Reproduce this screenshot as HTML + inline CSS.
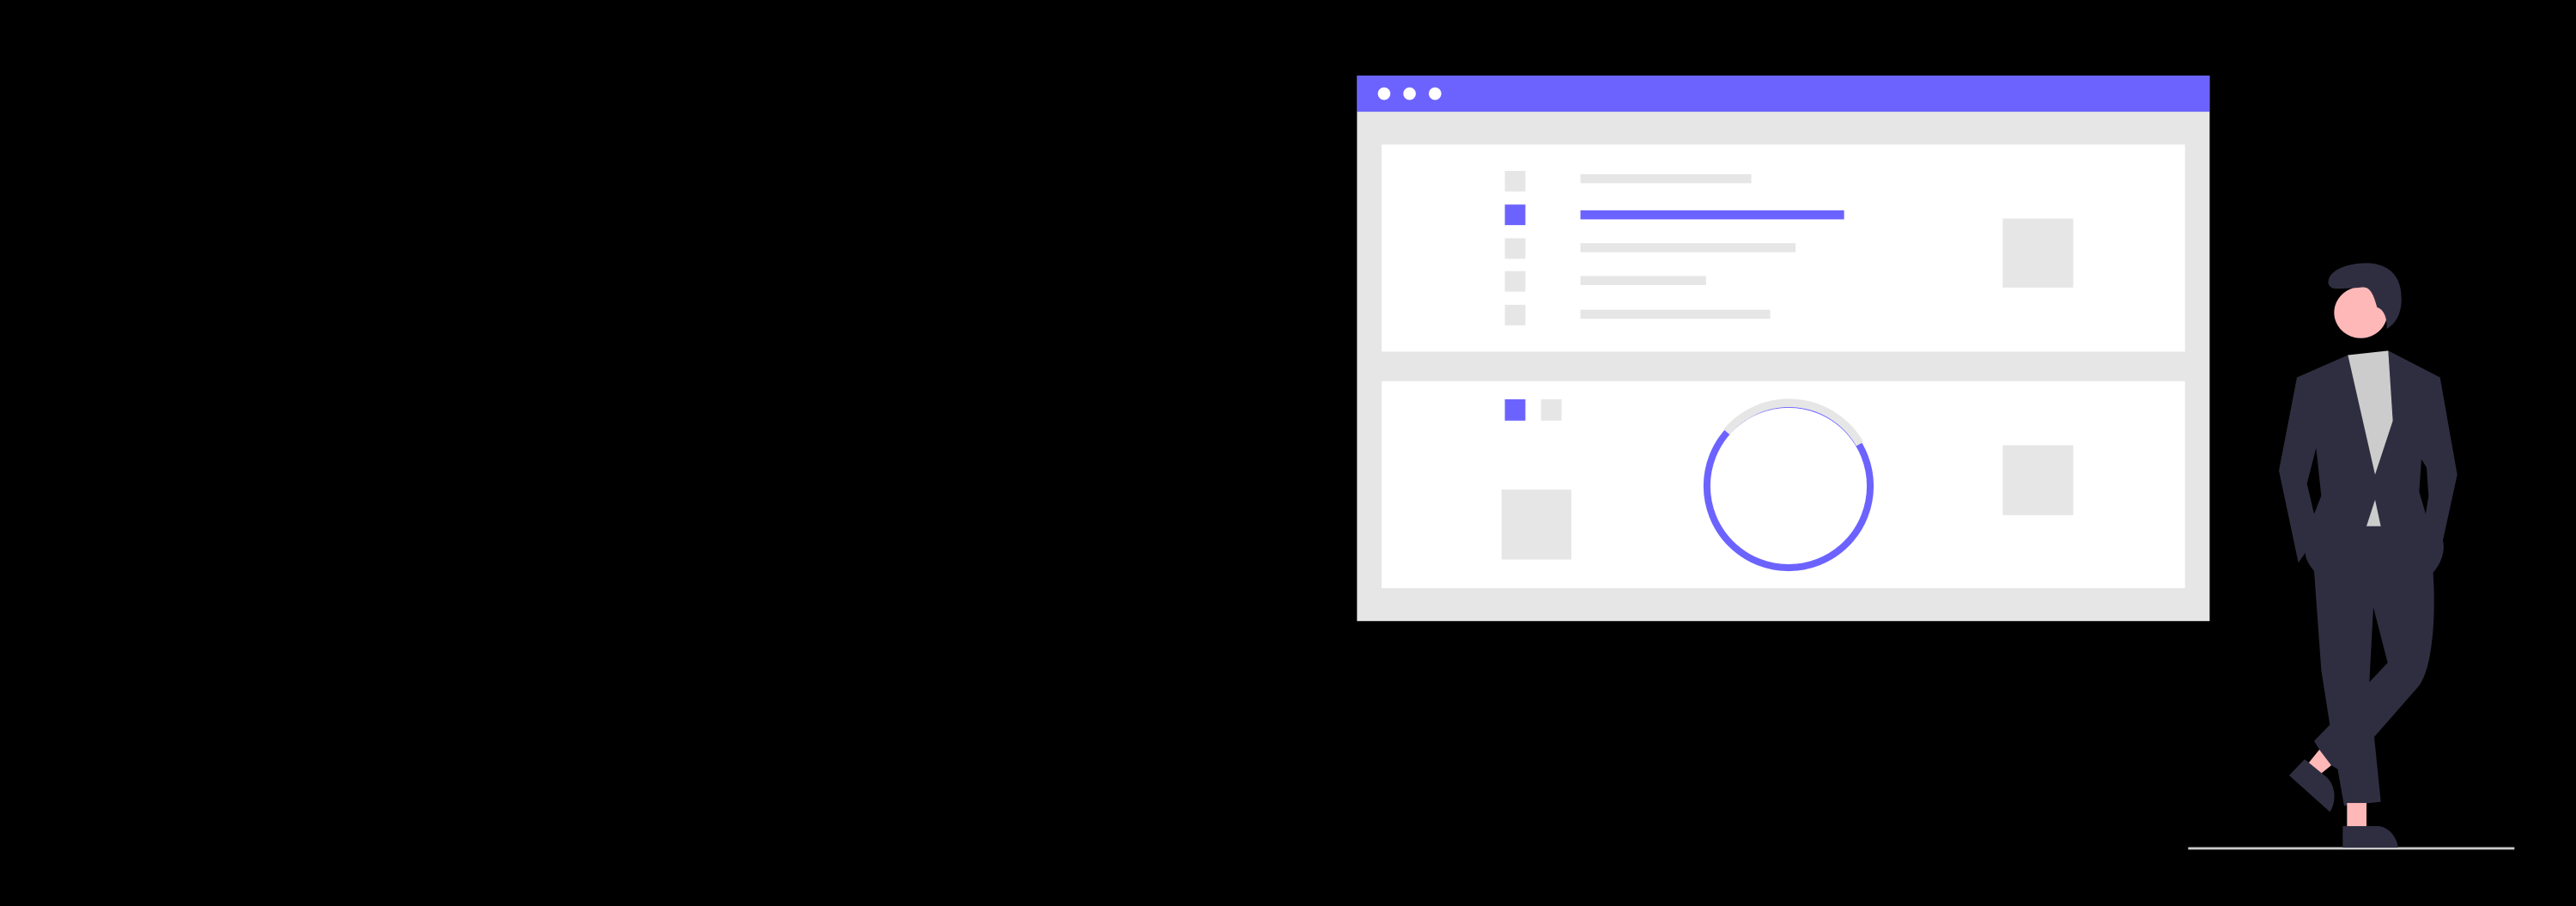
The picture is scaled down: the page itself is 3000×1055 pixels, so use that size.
<!DOCTYPE html>
<html><head><meta charset="utf-8"><style>
html,body{margin:0;padding:0;background:#000;width:3000px;height:1055px;overflow:hidden}
svg{position:absolute;display:block}
</style></head><body>
<svg style="left:0;top:0" width="3000" height="1055" viewBox="0 0 1568 551.4" preserveAspectRatio="none">
<rect x="826" y="46" width="519" height="332" fill="#e6e6e6"/>
<rect x="826" y="46" width="519" height="22" fill="#6c63ff"/>
<circle cx="842.5" cy="57" r="3.8" fill="#fff"/>
<circle cx="858" cy="57" r="3.8" fill="#fff"/>
<circle cx="873.5" cy="57" r="3.8" fill="#fff"/>
<rect x="841" y="88" width="489" height="126" fill="#fff"/>
<rect x="841" y="232" width="489" height="126" fill="#fff"/>
<rect x="916" y="104" width="12.5" height="12.5" fill="#e6e6e6"/>
<rect x="916" y="124.5" width="12.5" height="12.5" fill="#6c63ff"/>
<rect x="916" y="145" width="12.5" height="12.5" fill="#e6e6e6"/>
<rect x="916" y="165" width="12.5" height="12.5" fill="#e6e6e6"/>
<rect x="916" y="185.5" width="12.5" height="12.5" fill="#e6e6e6"/>
<rect x="962" y="106" width="104" height="5.5" fill="#e6e6e6"/>
<rect x="962" y="128" width="160.5" height="5.5" fill="#6c63ff"/>
<rect x="962" y="148" width="131" height="5.5" fill="#e6e6e6"/>
<rect x="962" y="168" width="76.5" height="5.5" fill="#e6e6e6"/>
<rect x="962" y="188.5" width="115.5" height="5.5" fill="#e6e6e6"/>
<rect x="1219" y="133" width="43" height="42" fill="#e6e6e6"/>
<rect x="916" y="243" width="12.5" height="13" fill="#6c63ff"/>
<rect x="938" y="243" width="12.5" height="13" fill="#e6e6e6"/>
<rect x="914" y="298" width="42.5" height="42.5" fill="#e6e6e6"/>
<rect x="1219" y="271" width="43" height="42.5" fill="#e6e6e6"/>
<circle cx="1088.7" cy="295.8" r="49.7" fill="none" stroke="#6c63ff" stroke-width="4.2"/>
<path d="M1051 262.9 A49.7 49.7 0 0 1 1132.1 270.2" fill="none" stroke="#e6e6e6" stroke-width="5"/>
</svg>
<svg style="left:2540px;top:280px" width="420" height="740" viewBox="0 0 1260 1568" preserveAspectRatio="none">
<rect x="25" y="1497" width="1140" height="6" fill="#cacaca"/>
<ellipse cx="628" cy="178" rx="93" ry="63" fill="#ffb8b8"/>
<path d="M515 100 C520 65 620 50 680 58 C745 68 772 100 770 150 C768 190 740 210 718 218 C722 195 710 170 685 165 C675 140 665 118 640 115 C600 118 560 120 530 118 C515 112 513 105 515 100 Z" fill="#2f2e41"/>
<path d="M465 815 L880 815 C890 900 885 1050 830 1100 L675 1225 L698 1385 L570 1395 L520 1195 L490 1060 Z" fill="#2f2e41"/>
<polygon points="672,905 722,1042 658,1090" fill="#000"/>
<polygon points="445,1290 485,1255 525,1295 490,1315" fill="#ffb8b8"/>
<polygon points="465,1235 520,1195 560,1310 525,1295 485,1258" fill="#2f2e41"/>
<path d="M378 1320 L432 1280 L510 1325 C545 1350 540 1390 520 1410 Z" fill="#2f2e41"/>
<rect x="580" y="1388" width="68" height="60" fill="#ffb8b8"/>
<path d="M565 1445 L690 1445 C730 1448 755 1475 758 1498 L565 1498 Z" fill="#2f2e41"/>
<path d="M405 338 L583 283 L678 578 L740 445 L724 272 L905 338 L965 578 L915 740 C925 770 905 800 880 820 L470 820 C445 800 432 780 435 770 L410 795 L342 568 Z" fill="#2f2e41"/>
<polygon points="583,283 724,272 740,445 678,578" fill="#cccccc"/>
<polygon points="648,705 678,640 698,705" fill="#cccccc"/>
<polygon points="472,512 440,600 465,675 490,630" fill="#000"/>
<polygon points="840,540 858,560 865,630 855,675 832,620" fill="#000"/>
</svg>
</body></html>
